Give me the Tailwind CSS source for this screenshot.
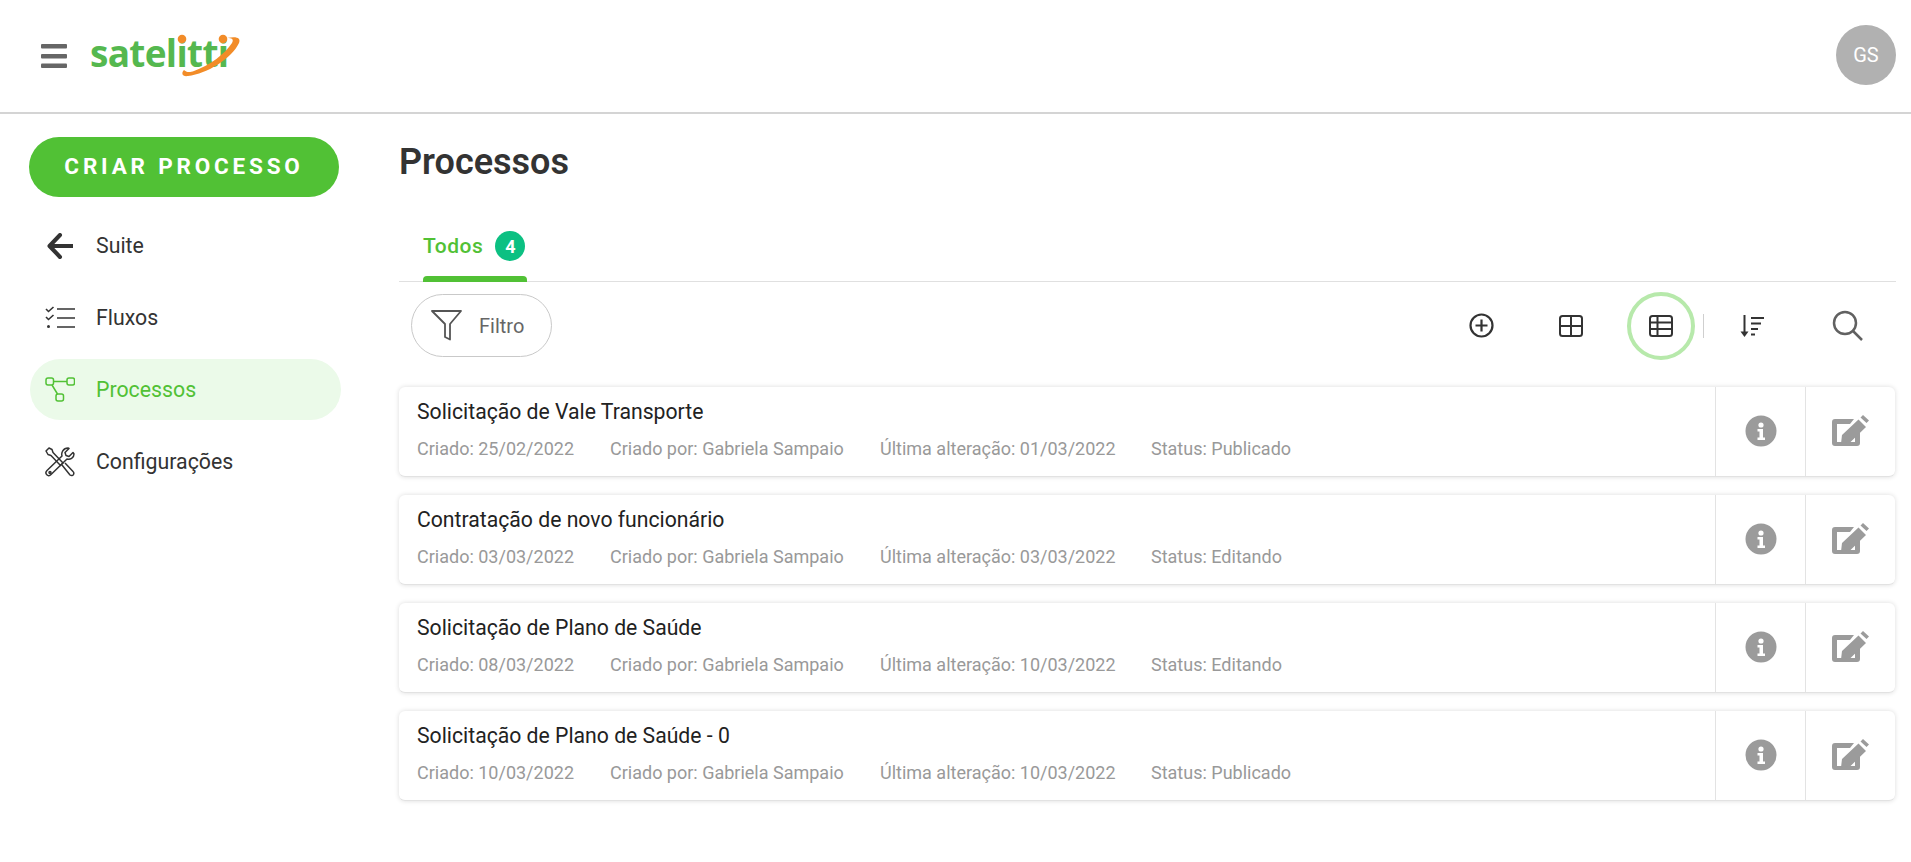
<!DOCTYPE html>
<html lang="pt">
<head>
<meta charset="utf-8">
<title>Processos</title>
<script src="https://cdn.jsdelivr.net/npm/@tailwindcss/browser@4"></script>
</head>
<body class="bg-white font-['Roboto',sans-serif] text-[#333] overflow-hidden">
<div class="w-[1911px] h-[862px] flex flex-col">
  <header class="h-[114px] shrink-0 border-b-2 border-[#d4d4d4] flex items-center pl-[41px] pr-[16px]">
    <svg class="w-[26px] h-[24px]" viewBox="0 0 26 24" fill="#666"><rect y="0" width="26" height="4.500" rx="1"/><rect y="10" width="26" height="4.500" rx="1"/><rect y="19.500" width="26" height="4.500" rx="1"/></svg>
    <div class="relative ml-[23px] w-[152px] h-[50px] -mt-[2px]">
      <span class="absolute left-0 top-[0px] font-['Open_Sans',sans-serif] font-bold text-[37px] leading-[46px] tracking-[-0.7px] text-[#55b84f]">satelitti</span>
      <svg class="absolute left-0 top-0 w-[152px] h-[50px]" viewBox="0 0 152 50" fill="none"><path d="M94 40c-3 3-2 7 4 6c19-2 44-18 51-33c2-5-2-7-12-5c5 0 7 1 5 5c-7 11-22 22-38 28c-5 2-8 1-10-1z" fill="#f28c28"/><circle cx="92" cy="9" r="4.300" fill="#f28c28"/><circle cx="133" cy="9" r="4.300" fill="#f28c28"/></svg>
    </div>
    <div class="ml-auto w-[60px] h-[60px] rounded-full bg-[#b1b1b1] text-white flex items-center justify-center text-[20px] mt-[-2px] mr-[-1px]">GS</div>
  </header>

  <div class="flex flex-1 min-h-0">
    <aside class="w-[399px] shrink-0 pl-[29px] pt-[23px]">
      <button class="w-[310px] h-[60px] rounded-full bg-[#51c135] text-white font-bold text-[22.500px] tracking-[3.800px] flex items-center justify-center">CRIAR PROCESSO</button>
      <nav class="mt-[18px] ml-px w-[311px] flex flex-col gap-[11px] text-[21.300px] leading-[26px] text-[#333]">
        <a class="h-[61px] flex items-center pl-[17px]">
          <svg class="w-[26px] h-[26px] mr-[23px]" viewBox="0 0 26 26" fill="none" stroke="#333" stroke-width="4" stroke-linecap="round" stroke-linejoin="round"><path d="M13 2L2.500 13 13 24"/><path d="M4 13h22" stroke-linecap="butt"/></svg>
          <span>Suite</span>
        </a>
        <a class="h-[61px] flex items-center pl-[15px]">
          <svg class="w-[30px] h-[24px] mr-[21px]" viewBox="0 0 30 24" fill="none" stroke="#333" stroke-width="1.600"><path d="M1 3l2.500 2.500L8.500 1M1 11l2.500 2.500L8.500 9"/><circle cx="3.500" cy="20.500" r="1.500" fill="#333" stroke="none"/><path d="M12 3h18M12 12h18M12 21h18"/></svg>
          <span>Fluxos</span>
        </a>
        <a class="h-[61px] rounded-full bg-[#ebfae9] text-[#51c135] flex items-center pl-[15px]">
          <svg class="w-[30px] h-[25px] mr-[21px]" viewBox="0 0 30 25" fill="none" stroke="#51c135" stroke-width="1.500"><rect x="1" y="1" width="7.500" height="7" rx="2"/><rect x="22" y="1" width="7.500" height="7" rx="2"/><rect x="11" y="17" width="7.500" height="7" rx="2"/><path d="M8.500 4.500H22M7 8l5.500 9"/></svg>
          <span>Processos</span>
        </a>
        <a class="h-[61px] flex items-center pl-[15px]">
          <svg class="w-[30px] h-[30px] mr-[21px]" viewBox="0 0 30 30" fill="none" stroke="#333" stroke-width="1.500" stroke-linejoin="round"><path d="M1 4l3-3 3 1.500 1 3L18 16l-2.500 2.500L6 8.500l-3-1z"/><path d="M29 7c0 4-4 6-7 5L6 27.500c-1.500 1.500-3 1.500-4.200.3s-1.200-2.800.2-4.300L17 9c-1-3 1-8 6-8l1 .5-4 4 1 3 3 1 4-4z" /><path d="M17 18l8 10c1.500 1 3 .5 3.500-.5s.5-2-.5-3L20 16"/><circle cx="5" cy="25.500" r="1"/></svg>
          <span>Configurações</span>
        </a>
      </nav>
    </aside>

    <main class="flex-1 min-w-0 pr-[15px]">
      <h1 class="mt-[28px] text-[36px] leading-[40px] font-semibold text-[#333]">Processos</h1>
      <div class="mt-[27px] h-[73px] border-b border-[#e0e0e0] relative flex items-center pl-[24px] pt-[4px] pb-[2px]">
        <span class="text-[#51c135] font-medium text-[21px] leading-[26px] tracking-[0.500px]">Todos</span>
        <span class="ml-[12px] w-[30px] h-[30px] rounded-full bg-[#0cc082] text-white font-bold text-[18px] flex items-center justify-center">4</span>
        <span class="absolute left-[24px] bottom-[-1px] w-[104px] h-[6px] rounded-t-[4px] bg-[#51c135]"></span>
      </div>

      <div class="mt-[12px] h-[63px] flex items-center pl-[12px]">
        <button class="w-[141px] h-[63px] rounded-full border border-[#c9c9c9] flex items-center pl-[19px] text-[20px] text-[#666]">
          <svg class="w-[31px] h-[31px] mr-[17px]" viewBox="0 0 31 31" fill="none" stroke="#555" stroke-width="1.800" stroke-linejoin="round"><path d="M1 1h29L19 14v15.500l-5-2.500V14z"/></svg>
          Filtro
        </button>
        <div class="ml-auto flex items-center">
          <span class="w-[68px] h-[68px] flex items-center justify-center mr-[22px]">
            <svg class="w-[25px] h-[25px]" viewBox="0 0 25 25" fill="none" stroke="#333" stroke-width="2.200"><circle cx="12.500" cy="12.500" r="11"/><path d="M12.500 6.500v12M6.500 12.500h12"/></svg>
          </span>
          <span class="w-[68px] h-[68px] flex items-center justify-center mr-[22px]">
            <svg class="w-[24px] h-[22px]" viewBox="0 0 24 22" fill="none" stroke="#333" stroke-width="2"><rect x="1" y="1" width="22" height="20" rx="2.500"/><path d="M1 11h22M12 1v20"/></svg>
          </span>
          <span class="w-[68px] h-[68px] rounded-full border-[4px] border-[#b7e9ab] flex items-center justify-center">
            <svg class="w-[24px] h-[22px]" viewBox="0 0 24 22" fill="none" stroke="#333" stroke-width="2"><rect x="1" y="1" width="22" height="20" rx="2.500"/><path d="M1 7.500h22M1 14h22M8.500 1v20"/></svg>
          </span>
          <span class="w-px h-[24px] bg-[#cfcfcf] ml-[8px]"></span>
          <span class="ml-[35px] w-[26px] flex justify-center">
            <svg class="w-[25px] h-[24px]" viewBox="0 0 25 24" fill="none" stroke="#333" stroke-width="2"><path d="M4.500 1v19"/><path d="M0.500 17.500h8l-4 5.500z" fill="#333" stroke="none"/><path d="M11 4h13M11 9.500h10M11 15h7M11 20.500h4"/></svg>
          </span>
          <span class="ml-[67px] mr-[33px]">
            <svg class="w-[31px] h-[31px] block" viewBox="0 0 31 31" fill="none" stroke="#616161" stroke-width="2.500"><circle cx="13" cy="13" r="11"/><path d="M21 21l9 9"/></svg>
          </span>
        </div>
      </div>

      <ul class="mt-[30px] flex flex-col gap-[18px] pr-[1px]">
        <li class="h-[90px] rounded-[6px] bg-white border-b border-[#e2e2e2] shadow-[0_0_5px_rgba(0,0,0,0.14)] flex">
          <div class="flex-1 min-w-0 pl-[18px] pt-[10px]">
            <h2 class="text-[21.200px] leading-[30px] font-normal text-[#222]">Solicitação de Vale Transporte</h2>
            <p class="mt-[12px] flex text-[18px] leading-[20px] text-[#999]"><span class="w-[193px]">Criado: 25/02/2022</span><span class="w-[270px]">Criado por: Gabriela Sampaio</span><span class="w-[271px]">Última alteração: 01/03/2022</span><span>Status: Publicado</span></p>
          </div>
          <div class="w-[90px] border-l border-[#e3e3e3] flex items-center justify-center">
            <svg class="w-[32px] h-[32px] -mt-[1px]" viewBox="0 0 32 32"><circle cx="16" cy="16" r="15.500" fill="#9b9b9b"/><circle cx="16" cy="10" r="2.600" fill="#fff"/><path d="M12.500 14h5.500v8.500h2V25h-7.500v-2.500h2v-6h-2z" fill="#fff"/></svg>
          </div>
          <div class="w-[90px] border-l border-[#e3e3e3] flex items-center justify-center">
            <svg class="w-[37px] h-[32px] -mt-[1px]" viewBox="0 0 37 32"><path d="M3 4h19l-4 5H5v18h18v-8l5-5v14a3 3 0 0 1-3 3H3a3 3 0 0 1-3-3V7a3 3 0 0 1 3-3z" fill="#9b9b9b"/><path d="M26.500 4.500l7.500 7.500L18 27.500l-9 1 1-8.500zM28.500 2.500l2.500-2.500 6 5.500-2.500 2.500z" fill="#9b9b9b"/></svg>
          </div>
        </li>
        <li class="h-[90px] rounded-[6px] bg-white border-b border-[#e2e2e2] shadow-[0_0_5px_rgba(0,0,0,0.14)] flex">
          <div class="flex-1 min-w-0 pl-[18px] pt-[10px]">
            <h2 class="text-[21.200px] leading-[30px] font-normal text-[#222]">Contratação de novo funcionário</h2>
            <p class="mt-[12px] flex text-[18px] leading-[20px] text-[#999]"><span class="w-[193px]">Criado: 03/03/2022</span><span class="w-[270px]">Criado por: Gabriela Sampaio</span><span class="w-[271px]">Última alteração: 03/03/2022</span><span>Status: Editando</span></p>
          </div>
          <div class="w-[90px] border-l border-[#e3e3e3] flex items-center justify-center">
            <svg class="w-[32px] h-[32px] -mt-[1px]" viewBox="0 0 32 32"><circle cx="16" cy="16" r="15.500" fill="#9b9b9b"/><circle cx="16" cy="10" r="2.600" fill="#fff"/><path d="M12.500 14h5.500v8.500h2V25h-7.500v-2.500h2v-6h-2z" fill="#fff"/></svg>
          </div>
          <div class="w-[90px] border-l border-[#e3e3e3] flex items-center justify-center">
            <svg class="w-[37px] h-[32px] -mt-[1px]" viewBox="0 0 37 32"><path d="M3 4h19l-4 5H5v18h18v-8l5-5v14a3 3 0 0 1-3 3H3a3 3 0 0 1-3-3V7a3 3 0 0 1 3-3z" fill="#9b9b9b"/><path d="M26.500 4.500l7.500 7.500L18 27.500l-9 1 1-8.500zM28.500 2.500l2.500-2.500 6 5.500-2.500 2.500z" fill="#9b9b9b"/></svg>
          </div>
        </li>
        <li class="h-[90px] rounded-[6px] bg-white border-b border-[#e2e2e2] shadow-[0_0_5px_rgba(0,0,0,0.14)] flex">
          <div class="flex-1 min-w-0 pl-[18px] pt-[10px]">
            <h2 class="text-[21.200px] leading-[30px] font-normal text-[#222]">Solicitação de Plano de Saúde</h2>
            <p class="mt-[12px] flex text-[18px] leading-[20px] text-[#999]"><span class="w-[193px]">Criado: 08/03/2022</span><span class="w-[270px]">Criado por: Gabriela Sampaio</span><span class="w-[271px]">Última alteração: 10/03/2022</span><span>Status: Editando</span></p>
          </div>
          <div class="w-[90px] border-l border-[#e3e3e3] flex items-center justify-center">
            <svg class="w-[32px] h-[32px] -mt-[1px]" viewBox="0 0 32 32"><circle cx="16" cy="16" r="15.500" fill="#9b9b9b"/><circle cx="16" cy="10" r="2.600" fill="#fff"/><path d="M12.500 14h5.500v8.500h2V25h-7.500v-2.500h2v-6h-2z" fill="#fff"/></svg>
          </div>
          <div class="w-[90px] border-l border-[#e3e3e3] flex items-center justify-center">
            <svg class="w-[37px] h-[32px] -mt-[1px]" viewBox="0 0 37 32"><path d="M3 4h19l-4 5H5v18h18v-8l5-5v14a3 3 0 0 1-3 3H3a3 3 0 0 1-3-3V7a3 3 0 0 1 3-3z" fill="#9b9b9b"/><path d="M26.500 4.500l7.500 7.500L18 27.500l-9 1 1-8.500zM28.500 2.500l2.500-2.500 6 5.500-2.500 2.500z" fill="#9b9b9b"/></svg>
          </div>
        </li>
        <li class="h-[90px] rounded-[6px] bg-white border-b border-[#e2e2e2] shadow-[0_0_5px_rgba(0,0,0,0.14)] flex">
          <div class="flex-1 min-w-0 pl-[18px] pt-[10px]">
            <h2 class="text-[21.200px] leading-[30px] font-normal text-[#222]">Solicitação de Plano de Saúde - 0</h2>
            <p class="mt-[12px] flex text-[18px] leading-[20px] text-[#999]"><span class="w-[193px]">Criado: 10/03/2022</span><span class="w-[270px]">Criado por: Gabriela Sampaio</span><span class="w-[271px]">Última alteração: 10/03/2022</span><span>Status: Publicado</span></p>
          </div>
          <div class="w-[90px] border-l border-[#e3e3e3] flex items-center justify-center">
            <svg class="w-[32px] h-[32px] -mt-[1px]" viewBox="0 0 32 32"><circle cx="16" cy="16" r="15.500" fill="#9b9b9b"/><circle cx="16" cy="10" r="2.600" fill="#fff"/><path d="M12.500 14h5.500v8.500h2V25h-7.500v-2.500h2v-6h-2z" fill="#fff"/></svg>
          </div>
          <div class="w-[90px] border-l border-[#e3e3e3] flex items-center justify-center">
            <svg class="w-[37px] h-[32px] -mt-[1px]" viewBox="0 0 37 32"><path d="M3 4h19l-4 5H5v18h18v-8l5-5v14a3 3 0 0 1-3 3H3a3 3 0 0 1-3-3V7a3 3 0 0 1 3-3z" fill="#9b9b9b"/><path d="M26.500 4.500l7.500 7.500L18 27.500l-9 1 1-8.500zM28.500 2.500l2.500-2.500 6 5.500-2.500 2.500z" fill="#9b9b9b"/></svg>
          </div>
        </li>
      </ul>
    </main>
  </div>
</div>
</body>
</html>
